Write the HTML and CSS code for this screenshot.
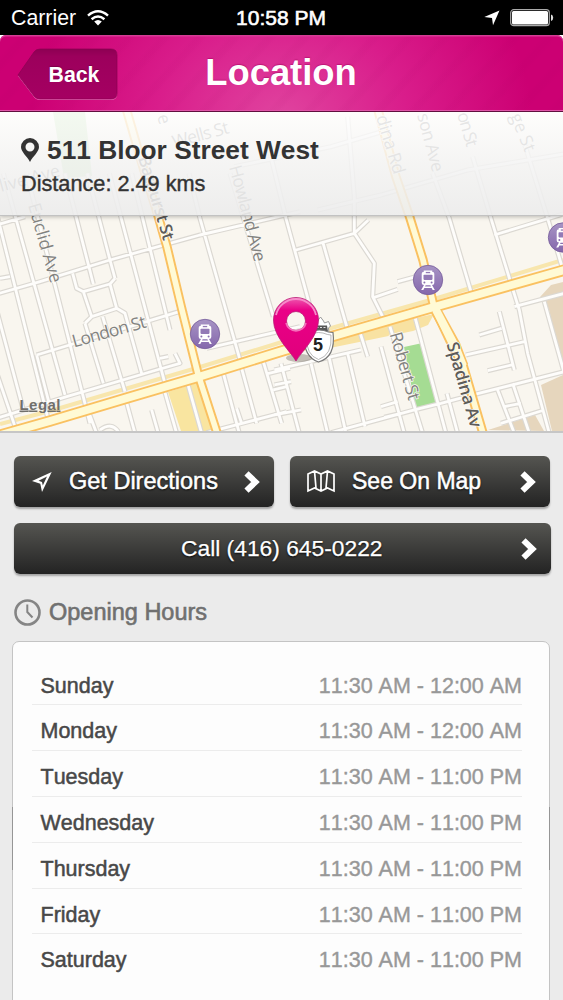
FILE: index.html
```html
<!DOCTYPE html>
<html lang="en">
<head>
<meta charset="utf-8">
<title>Location</title>
<link rel="stylesheet" href="styles.css">
</head>
<body>
<div class="status">
  <div class="status-left">
    <span class="carrier">Carrier</span>
    <svg class="wifi" viewBox="0 0 22 16" width="22" height="16"><g fill="none" stroke="#fff" stroke-width="2.5"><path d="M1 5.6Q11-3 21 5.6"/><path d="M4.6 9.2Q11 3.8 17.4 9.2"/></g><path d="M7.2 11.6Q11 8.6 14.8 11.6L11 15.6Z" fill="#fff"/></svg>
  </div>
  <span class="clock">10:58 PM</span>
  <div class="status-right">
    <svg viewBox="0 0 16 16" width="16" height="16"><path d="M15.5.5L9 15.2 8 8 .3 7Z" fill="#fff"/></svg>
    <svg viewBox="0 0 44 18" width="44" height="18"><rect x=".7" y=".7" width="38.6" height="16" rx="3" fill="none" stroke="#aaa" stroke-width="1.2"/><rect x="2" y="2" width="36" height="13.4" rx="1.5" fill="#fff"/><path d="M41 5.5Q43.2 6 43.2 8.7T41 12Z" fill="#ddd"/></svg>
  </div>
</div>

<div class="header-wrap">
<header class="header">
  <a class="back">
    <svg class="back-shape" viewBox="0 0 102 54" width="102" height="54"><defs><linearGradient id="bk" x2="0" y2="1"><stop offset="0" stop-color="#8d0053"/><stop offset=".15" stop-color="#9c005c"/><stop offset="1" stop-color="#a50062"/></linearGradient></defs><path d="M1 28L17 5Q19 2 23 2H94Q100 2 100 8V46Q100 52 94 52H23Q19 52 17 49Z" fill="#f06abb"/><path d="M1 27L17 4Q19 1 23 1H94Q100 1 100 7V45Q100 51 94 51H23Q19 51 17 48Z" fill="url(#bk)" stroke="#8a0050" stroke-width=".7"/></svg>
    <span>Back</span>
  </a>
  <h1>Location</h1>
</header>
</div>

<section class="map">
<svg class="map-art" viewBox="0 112 563 319" width="563" height="319">
  <defs>
    <g id="west">
      <path d="M-30 258L120 215 330 150 600 75 900 5M-60 60L75 20M-40 -110L150 650M10 -110L195 555M80 -110L270 640M195 -110L280 222M262 -110L330 150 345 205M328 -110L500 540M395 -110L510 360M567 -110L600 25 720 450M690 -110L820 320M-10 300L70 600M-40 400L45 650M110 435L560 298M110 435L150 590M255 340L310 520M308 320L375 545M350 295L375 310 425 490M218 190L230 235 250 245 330 222 345 205M250 245L275 320 350 295 330 222M255 340L275 320M-10 625L200 560 470 480 540 460 525 430M480 445L505 440M620 415L900 350M260 590L290 670M375 560L405 670M490 530L530 670M560 510L605 670M670 490L718 670M725 475L770 640M790 455L845 640M455 600L475 670M620 668L860 605M800 492L870 475M820 540L860 530M710 595L725 640M0 205L30 200M300 660Q335 635 355 665"/>
    </g>
    <g id="east">
      <path d="M-40 -200L15 25 90 300M45 120L220 70 262 30M220 70V-40L200 -280M220 70L280 160 275 260 310 330M125 95L200 360M280 262L350 238M350 215L405 200M-140 -130L150 -190 320 -240M110 0L300 -45 560 -120 860 -170M455 -110L505 25 570 245M575 -160L630 25 690 220 715 300 740 430 805 670M730 -200L800 25 846 180M640 75L870 5M700 290L870 245M790 275L850 490M655 305L700 480M595 375L662 355M555 435L730 395M620 482L692 465M480 580L575 555 870 480M150 668L400 600 480 580M-20 480L240 420M0 460L55 670M200 430L252 650M145 445L195 670M90 460L140 670M238 370L260 440M300 410L370 670M327 350L425 670M403 325L495 670M498 550L530 670M650 540L700 670M695 520L745 670M300 590L350 575M310 622L360 610M660 640L790 600M670 590L720 580M-20 525L30 515M-20 615L60 600"/>
    </g>
    <g id="roads"><use href="#west" transform="translate(0 210) scale(.3333)"/><use href="#east" transform="translate(281 210) scale(.3333)"/></g>
    <path id="bloor" d="M-10 438L50 421 127 398 200 376.5 282 351 358 329 434 307 575 267"/>
    <path id="bathurst" d="M126 108L143 167 157 212 167 247 182 310 198 374 218 436"/>
    <path id="spadina" d="M378 110L396 177 410 218 423 260 434 307 453 347 463 365 485 440"/>
    <linearGradient id="violet" x2="0" y2="1"><stop offset="0" stop-color="#a794c4"/><stop offset="1" stop-color="#8567ac"/></linearGradient>
    <linearGradient id="pinfill" x2="0" y2="1"><stop offset="0" stop-color="#ee5bb0"/><stop offset=".2" stop-color="#ea0087"/><stop offset="1" stop-color="#e0007c"/></linearGradient>
    <g id="tram">
      <circle r="14.7" fill="url(#violet)" stroke="#765d9a" stroke-width=".8"/>
      <path d="M-4.3 -9.4H4.3V-8H5Q6.3 -8 6.3 -6V3Q6.3 5 4 5L6.8 10H4.7L3.6 8H-3.6L-4.7 10H-6.8L-4 5Q-6.3 5 -6.3 3V-6Q-6.3 -8 -5 -8H-4.3Z" fill="#fff"/>
      <rect x="-2.2" y="-8.1" width="4.4" height="1.3" fill="#937ab6"/>
      <rect x="-4.5" y="-5.3" width="9" height="5.2" rx=".8" fill="#937ab6"/>
      <circle cx="-3.6" cy="2.5" r="1" fill="#8b70b0"/><circle cx="3.6" cy="2.5" r="1" fill="#8b70b0"/>
      <path d="M-2.4 5.2H2.4L3 6.6H-3Z" fill="#8b70b0"/>
    </g>
  </defs>
  <rect y="112" width="563" height="319" fill="#f9f6ef"/>
  <path d="M53 112H85L92 176 64 178Z" fill="#c5e3b4"/>
  <path d="M168 392L200 382 214 431H181Z" fill="#f9e5a0"/>
  <path d="M540 297L551 285 563 282V370L549 310ZM541 385L563 375V431H552ZM488 430L535 415 544 431Z" fill="#e6d6bd"/>
  <path d="M404 347L422.500 343 438 405 416 410Z" fill="#a5dc93"/>
  <path d="M330 337L434 314 428 325 413 331 330 348Z" fill="#f8e2a2"/>
  <path d="M0 424L50 411 200 367 282 342 434 299 563 260" fill="none" stroke="#f8e6ad" stroke-width="4"/>
  <use href="#roads" class="road-edge"/>
  <use href="#roads" class="road-fill"/>
  <g class="main-edge"><use href="#bathurst"/><use href="#spadina"/><use href="#bloor" stroke-width="11.500"/></g>
  <path d="M434 307L455 345 463 366" fill="none" stroke="#fac161" stroke-width="11"/>
  <g class="main-fill"><use href="#bathurst"/><use href="#spadina"/><use href="#bloor" stroke-width="7.800"/></g>
  <path d="M436 310L455 346 463 366" fill="none" stroke="#fffad5" stroke-width="8"/>
  <g class="labels">
    <text transform="translate(74 347.500) rotate(-15.500)" textLength="76">London St</text>
    <text transform="translate(28 205) rotate(74)" textLength="82">Euclid Ave</text>
    <text transform="translate(138 158) rotate(73)" textLength="87" class="dark">Bathurst St</text>
    <text transform="translate(229 167) rotate(75)" textLength="99">Howland Ave</text>
    <text transform="translate(389.500 334) rotate(74)" textLength="70">Robert St</text>
    <text transform="translate(446.500 344) rotate(74)" textLength="88" class="dark">Spadina Av</text>
    <text transform="translate(376 117) rotate(73)" textLength="61">dina Rd</text>
    <text transform="translate(417 115) rotate(75)" textLength="60">son Ave</text>
    <text transform="translate(457 114) rotate(74)" textLength="35">on St</text>
    <text transform="translate(510 116) rotate(68)" textLength="40">ge St</text>
    <text transform="translate(174 148) rotate(-15)" textLength="58">Wells St</text>
    <text transform="translate(1 192) rotate(-15)" textLength="62">live Ave</text>
    <text transform="translate(157 116) rotate(74)">e</text>
  </g>
  <use href="#tram" x="205" y="334"/><use href="#tram" x="428" y="280"/><use href="#tram" x="563" y="237.500"/>
  <g transform="translate(318.500 345)">
    <path d="M-9 -15L-4 -21 -1 -24 2 -28 5 -24 6 -22 10 -23.500 12 -19 10 -17 10.500 -12H-9Z" fill="#fff" stroke="#999" stroke-width="1"/>
    <path d="M-8 -13.500L-5 -19.500H8.500L9.500 -13.500Z" fill="#555"/><path d="M-2 -17.500H7" stroke="#ddd" stroke-width="1" stroke-dasharray="2 1.500"/>
    <path d="M-9 -13Q1 -17 10 -13L14.500 -12.500Q17.500 12 0 17Q-15 12 -14.500 -10Z" fill="#fff" stroke="#777" stroke-width="1.200"/>
    <path d="M-9 -10.500Q0 -14.500 9 -10.500L12.500 -10Q14 10 0 14.500Q-12.500 10 -12 -8Z" fill="none" stroke="#999" stroke-width=".7"/>
    <text class="route" x="-.5" y="6" text-anchor="middle">5</text>
  </g>
  <ellipse cx="299" cy="358" rx="13" ry="4" fill="#71685f" opacity=".4"/>
  <path fill-rule="evenodd" d="M296 361C291 352 273.500 337 273.500 320A22.500 22.500 0 0 1 318.500 320C318.500 337 301 352 296 361ZM296 311.500A9.500 9.500 0 1 0 296 330.500A9.500 9.500 0 0 0 296 311.500Z" fill="url(#pinfill)" stroke="#b81c75" stroke-width=".8"/>
  <path d="M276 315A20.500 20.500 0 0 1 316 315" fill="none" stroke="#f68bc9" stroke-width="1.800"/>
  <path d="M286 323A10.300 10.300 0 0 0 306 323" fill="none" stroke="#f56fbb" stroke-width="1.600"/>
  <text class="legal" x="19.500" y="409.500" textLength="41">Legal</text>
</svg>
<div class="info">
  <h2 class="address"><svg viewBox="0 0 18 24" width="18" height="24"><path fill-rule="evenodd" d="M9 0A9 9 0 0 0 0 9C0 14 6 18 9 24C12 18 18 14 18 9A9 9 0 0 0 9 0ZM9 4.500A4.500 4.500 0 1 1 9 13.500A4.500 4.500 0 0 1 9 4.500Z" fill="#333"/></svg><span>511 Bloor Street West</span></h2>
  <p class="distance">Distance: 2.49 kms</p>
</div>
</section>

<main class="content">
  <div class="pair">
    <a class="btn">
      <svg viewBox="0 0 20 20" width="20" height="20"><path fill-rule="evenodd" d="M19.700 0L10 20 8.300 11.700 0 9ZM15 4.500L6.500 8.800 10 10 10.800 13.500Z" fill="#fff"/></svg>
      <span class="label directions">Get Directions</span>
      <svg class="chev" viewBox="0 0 16 22" width="16" height="22"><path d="M2.500 2.300L11.500 11 2.500 19.700" fill="none" stroke="#fff" stroke-width="6"/></svg>
    </a>
    <a class="btn map-btn">
      <svg viewBox="0 0 28 23" width="28" height="23"><path d="M1 4L7.500 1 14 4 20.500 1 27 4V21L20.500 18 14 21 7.500 18 1 21ZM7.500 1L9 18M14 4V21M20.500 1L19 18" fill="none" stroke="#fff" stroke-width="1.700"/></svg>
      <span class="label see">See On Map</span>
      <svg class="chev" viewBox="0 0 16 22" width="16" height="22"><path d="M2.500 2.300L11.500 11 2.500 19.700" fill="none" stroke="#fff" stroke-width="6"/></svg>
    </a>
  </div>
  <a class="btn call">
    <span class="label">Call (416) 645-0222</span>
    <svg class="chev" viewBox="0 0 16 22" width="16" height="22"><path d="M2.500 2.300L11.500 11 2.500 19.700" fill="none" stroke="#fff" stroke-width="6"/></svg>
  </a>
  <h3 class="hours-title"><svg viewBox="0 0 27 27" width="27" height="27"><g fill="none" stroke="#858585"><circle cx="13.500" cy="13.500" r="12" stroke-width="2.600"/><path d="M13.300 5.500V13L18.500 18.500" stroke-width="2"/></g></svg><span>Opening Hours</span></h3>
  <div class="card">
    <dl class="row"><dt>Sunday</dt><dd>11:30 AM - 12:00 AM</dd></dl>
    <dl class="row"><dt>Monday</dt><dd>11:30 AM - 12:00 AM</dd></dl>
    <dl class="row"><dt>Tuesday</dt><dd>11:30 AM - 11:00 PM</dd></dl>
    <dl class="row"><dt>Wednesday</dt><dd>11:30 AM - 11:00 PM</dd></dl>
    <dl class="row"><dt>Thursday</dt><dd>11:30 AM - 11:00 PM</dd></dl>
    <dl class="row"><dt>Friday</dt><dd>11:30 AM - 11:00 PM</dd></dl>
    <dl class="row"><dt>Saturday</dt><dd>11:30 AM - 11:00 PM</dd></dl>
  </div>
</main>
</body>
</html>
```
FILE: styles.css
```css
* { box-sizing: border-box; margin: 0; padding: 0; }
html, body { height: 1000px; overflow: hidden; }
body {
  width: 563px;
  background: #ebebeb;
  font-family: "Liberation Sans", Arial, sans-serif;
  font-kerning: none;
  color: #333;
}
svg { display: block; flex: none; }

.status {
  height: 35px;
  padding: 1px 9px 0 11px;
  display: grid;
  grid-template-columns: 1fr auto 1fr;
  align-items: center;
  background: #000;
  color: #fff;
  font-size: 21.3px;
}
.status-left, .status-right { display: flex; align-items: center; gap: 11px; }
.status-right { justify-content: flex-end; gap: 10px; }
.carrier { line-height: 34px; }
.clock { margin-left: -3px; font-size: 21px; -webkit-text-stroke: .6px #fff; }

.header-wrap { height: 77px; background: #fff; }
.header {
  height: 77px;
  display: grid;
  grid-template-columns: 1fr auto 1fr;
  padding: 14px 18px 0 17px;
  align-items: start;
  border-radius: 6px 6px 0 0;
  border-bottom: 1.5px solid #62103f;
  box-shadow: inset 0 1.5px 0 #d63c95, inset 0 -1px 0 #e055a8;
  background:
    repeating-linear-gradient(132deg, transparent 0 14px, rgba(150,0,90,.035) 18px 22px, transparent 26px),
    radial-gradient(ellipse 250px 210px at 50% 110%, #e0449f, #d91d8b 50%, #cc0073);
  color: #fff;
}
.back { display: grid; width: 102px; height: 54px; margin-top: -1px; }
.back > * { grid-area: 1 / 1; }
.back span {
  padding-left: 31.5px;
  font-size: 21.3px;
  line-height: 54px;
  font-weight: bold;
  position: relative;
  text-shadow: 0 -1px 1px #7c0048;
}
.header h1 { font-size: 36.4px; line-height: 48px; text-shadow: 0 -1px 1px rgba(160,0,90,.5); }

.map { height: 321px; position: relative; border-bottom: 2px solid #c6c6c6; overflow: hidden; }
.road-edge, .road-fill, .main-edge, .main-fill { fill: none; stroke-linejoin: round; }
.road-edge { stroke: #dbd8d2; stroke-width: 15.5; }
.road-fill { stroke: #fefdfb; stroke-width: 8.5; }
.main-edge { stroke: #fac161; stroke-width: 9.5; }
.main-fill { stroke: #fffad5; stroke-width: 5.6; }
.labels { font: 17.5px "Open Sans", sans-serif; fill: #82827f; paint-order: stroke; stroke: #fbf9f4; stroke-width: 1.5px; }
.labels .dark { fill: #5e5c58; font-weight: 600; font-size: 17px; }
.route { font: bold 18px "Liberation Sans", sans-serif; fill: #222; }
.legal { font: bold 15px "Liberation Sans", sans-serif; fill: #706f6c; text-decoration: underline; }

.info {
  position: absolute;
  inset: 0 0 auto;
  height: 104px;
  padding: 22px 21px;
  background: linear-gradient(rgba(255,255,255,.8), rgba(244,244,244,.86) 50%, rgba(236,236,236,.89));
  border-bottom: 1px solid #c2c2c2;
  box-shadow: 0 1px 4px rgba(0,0,0,.25);
}
.address { display: flex; align-items: center; gap: 8px; font-size: 26.3px; line-height: 32px; white-space: nowrap; }
.distance { margin-top: 5px; font-size: 21.7px; line-height: 26px; -webkit-text-stroke: .4px #333; }

.content { padding: 23px 12px 0 14px; }
.pair { display: flex; gap: 16px; margin-bottom: 16px; }
.btn {
  height: 51px;
  flex: none;
  width: 260px;
  display: flex;
  align-items: center;
  padding: 0 14px 0 18px;
  border-radius: 6px;
  background: linear-gradient(#555551, #232323);
  box-shadow: 0 2px 2px rgba(0,0,0,.3);
  color: #fff;
  font-size: 23.5px;
  text-shadow: 0 1px 2px #000;
  -webkit-text-stroke: .5px #fff;
}
.btn .label { line-height: 51px; white-space: nowrap; }
.directions { margin-left: 17px; }
.map-btn { padding-left: 17px; font-size: 23px; }
.see { margin-left: 17px; }
.chev { margin-left: auto; }
.call { width: 537px; padding: 0 14px 0 167px; font-size: 22.8px; -webkit-text-stroke: .25px #fff; }

.hours-title {
  display: flex;
  align-items: center;
  gap: 8px;
  height: 28px;
  margin-top: 24px;
  font-size: 23.5px;
  font-weight: normal;
  color: #707070;
  -webkit-text-stroke: .6px #707070;
}
.card {
  position: relative;
  width: 538px;
  height: 380px;
  margin: 15px 0 0 -2px;
  padding: 17.7px 27px 0 19px;
  border: 1px solid #c4c4c4;
  border-radius: 7px 7px 0 0;
  background: #fdfdfd;
}
.card::after {
  content: "";
  position: absolute;
  inset: 165px -1px auto;
  height: 63px;
  border: solid #969696;
  border-width: 0 1px;
}
.row {
  height: 45.8px;
  display: flex;
  justify-content: space-between;
  padding-left: 8.5px;
  line-height: 53px;
  font-size: 21.5px;
  border-bottom: 1px solid #ececec;
}
.row:last-child { border-bottom: 0; }
.row dt { color: #484848; -webkit-text-stroke: .5px #484848; }
.row dd { color: #989898; -webkit-text-stroke: .4px #989898; }
```
